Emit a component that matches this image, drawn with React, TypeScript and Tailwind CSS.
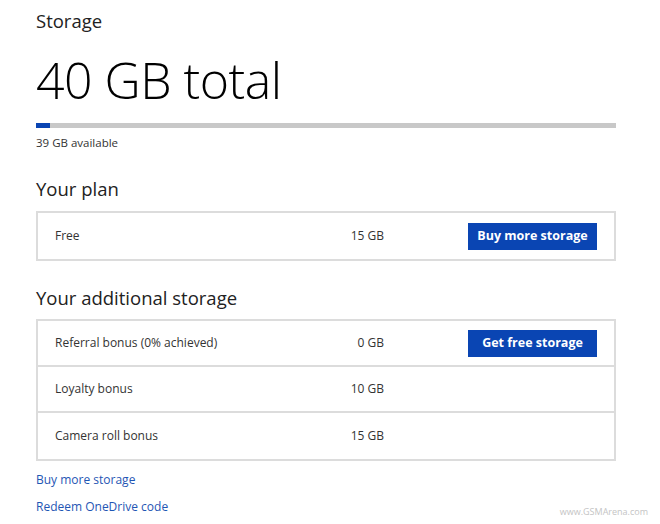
export default function App() {
  const rows = [
    { label: "Referral bonus (0% achieved)", value: "0 GB", action: "Get free storage" },
    { label: "Loyalty bonus", value: "10 GB" },
    { label: "Camera roll bonus", value: "15 GB" },
  ];

  return (
    <main
      className="relative w-[660px] h-[524px] bg-white overflow-hidden text-[#222]"
      style={{ fontFamily: '"Open Sans", "Noto Sans", Arial, sans-serif' }}
    >
      <div className="pl-[36px] pr-[44px] pt-[6px]">
        {/* Header */}
        <h2 className="text-[18.5px] leading-[30px] font-normal text-[#222]">Storage</h2>
        <h1 className="mt-[13px] text-[50px] leading-[62px] font-light tracking-[-0.5px] text-black">
          40 GB total
        </h1>

        {/* Usage bar */}
        <div className="mt-[12px] h-[5px] w-full bg-[#c8c8c8] flex">
          <div className="h-full w-[14px] bg-[#0a45b3]" />
        </div>
        <p className="mt-[7px] text-[11.5px] leading-[16px] text-[#333]">39 GB available</p>

        {/* Plan */}
        <h3 className="mt-[25px] text-[18.5px] leading-[26px] font-normal">Your plan</h3>
        <div className="mt-[9px] border-2 border-[#dcdcdc]">
          <Row label="Free" value="15 GB" action="Buy more storage" />
        </div>

        {/* Additional */}
        <h3 className="mt-[24px] text-[18.5px] leading-[26px] font-normal">Your additional storage</h3>
        <div className="mt-[8px] border-2 border-[#dcdcdc] flex flex-col divide-y-2 divide-[#dcdcdc]">
          {rows.map((r) => (
            <Row key={r.label} label={r.label} value={r.value} action={r.action} />
          ))}
        </div>

        {/* Links */}
        <div className="mt-[10px] flex flex-col gap-[10px] text-[12px] leading-[17px] text-[#1f56b4]">
          <a href="#">Buy more storage</a>
          <a href="#">Redeem OneDrive code</a>
        </div>
      </div>

      {/* Watermark */}
      <span className="absolute right-[12px] bottom-[6px] text-[9px] text-[#c4c4c4]">www.GSMArena.com</span>
    </main>
  );
}

function Row({ label, value, action }: { label: string; value: string; action?: string }) {
  return (
    <div className="h-[46px] flex items-center pl-[17px] pr-[17px] text-[12px] text-[#333]">
      <span className="flex-1">{label}</span>
      <span className="w-[80px] text-right">{value}</span>
      <div className="ml-[84px] w-[129px]">
        {action && (
          <button className="w-full h-[27px] bg-[#0a45b3] text-white text-[12.5px] font-bold">{action}</button>
        )}
      </div>
    </div>
  );
}
